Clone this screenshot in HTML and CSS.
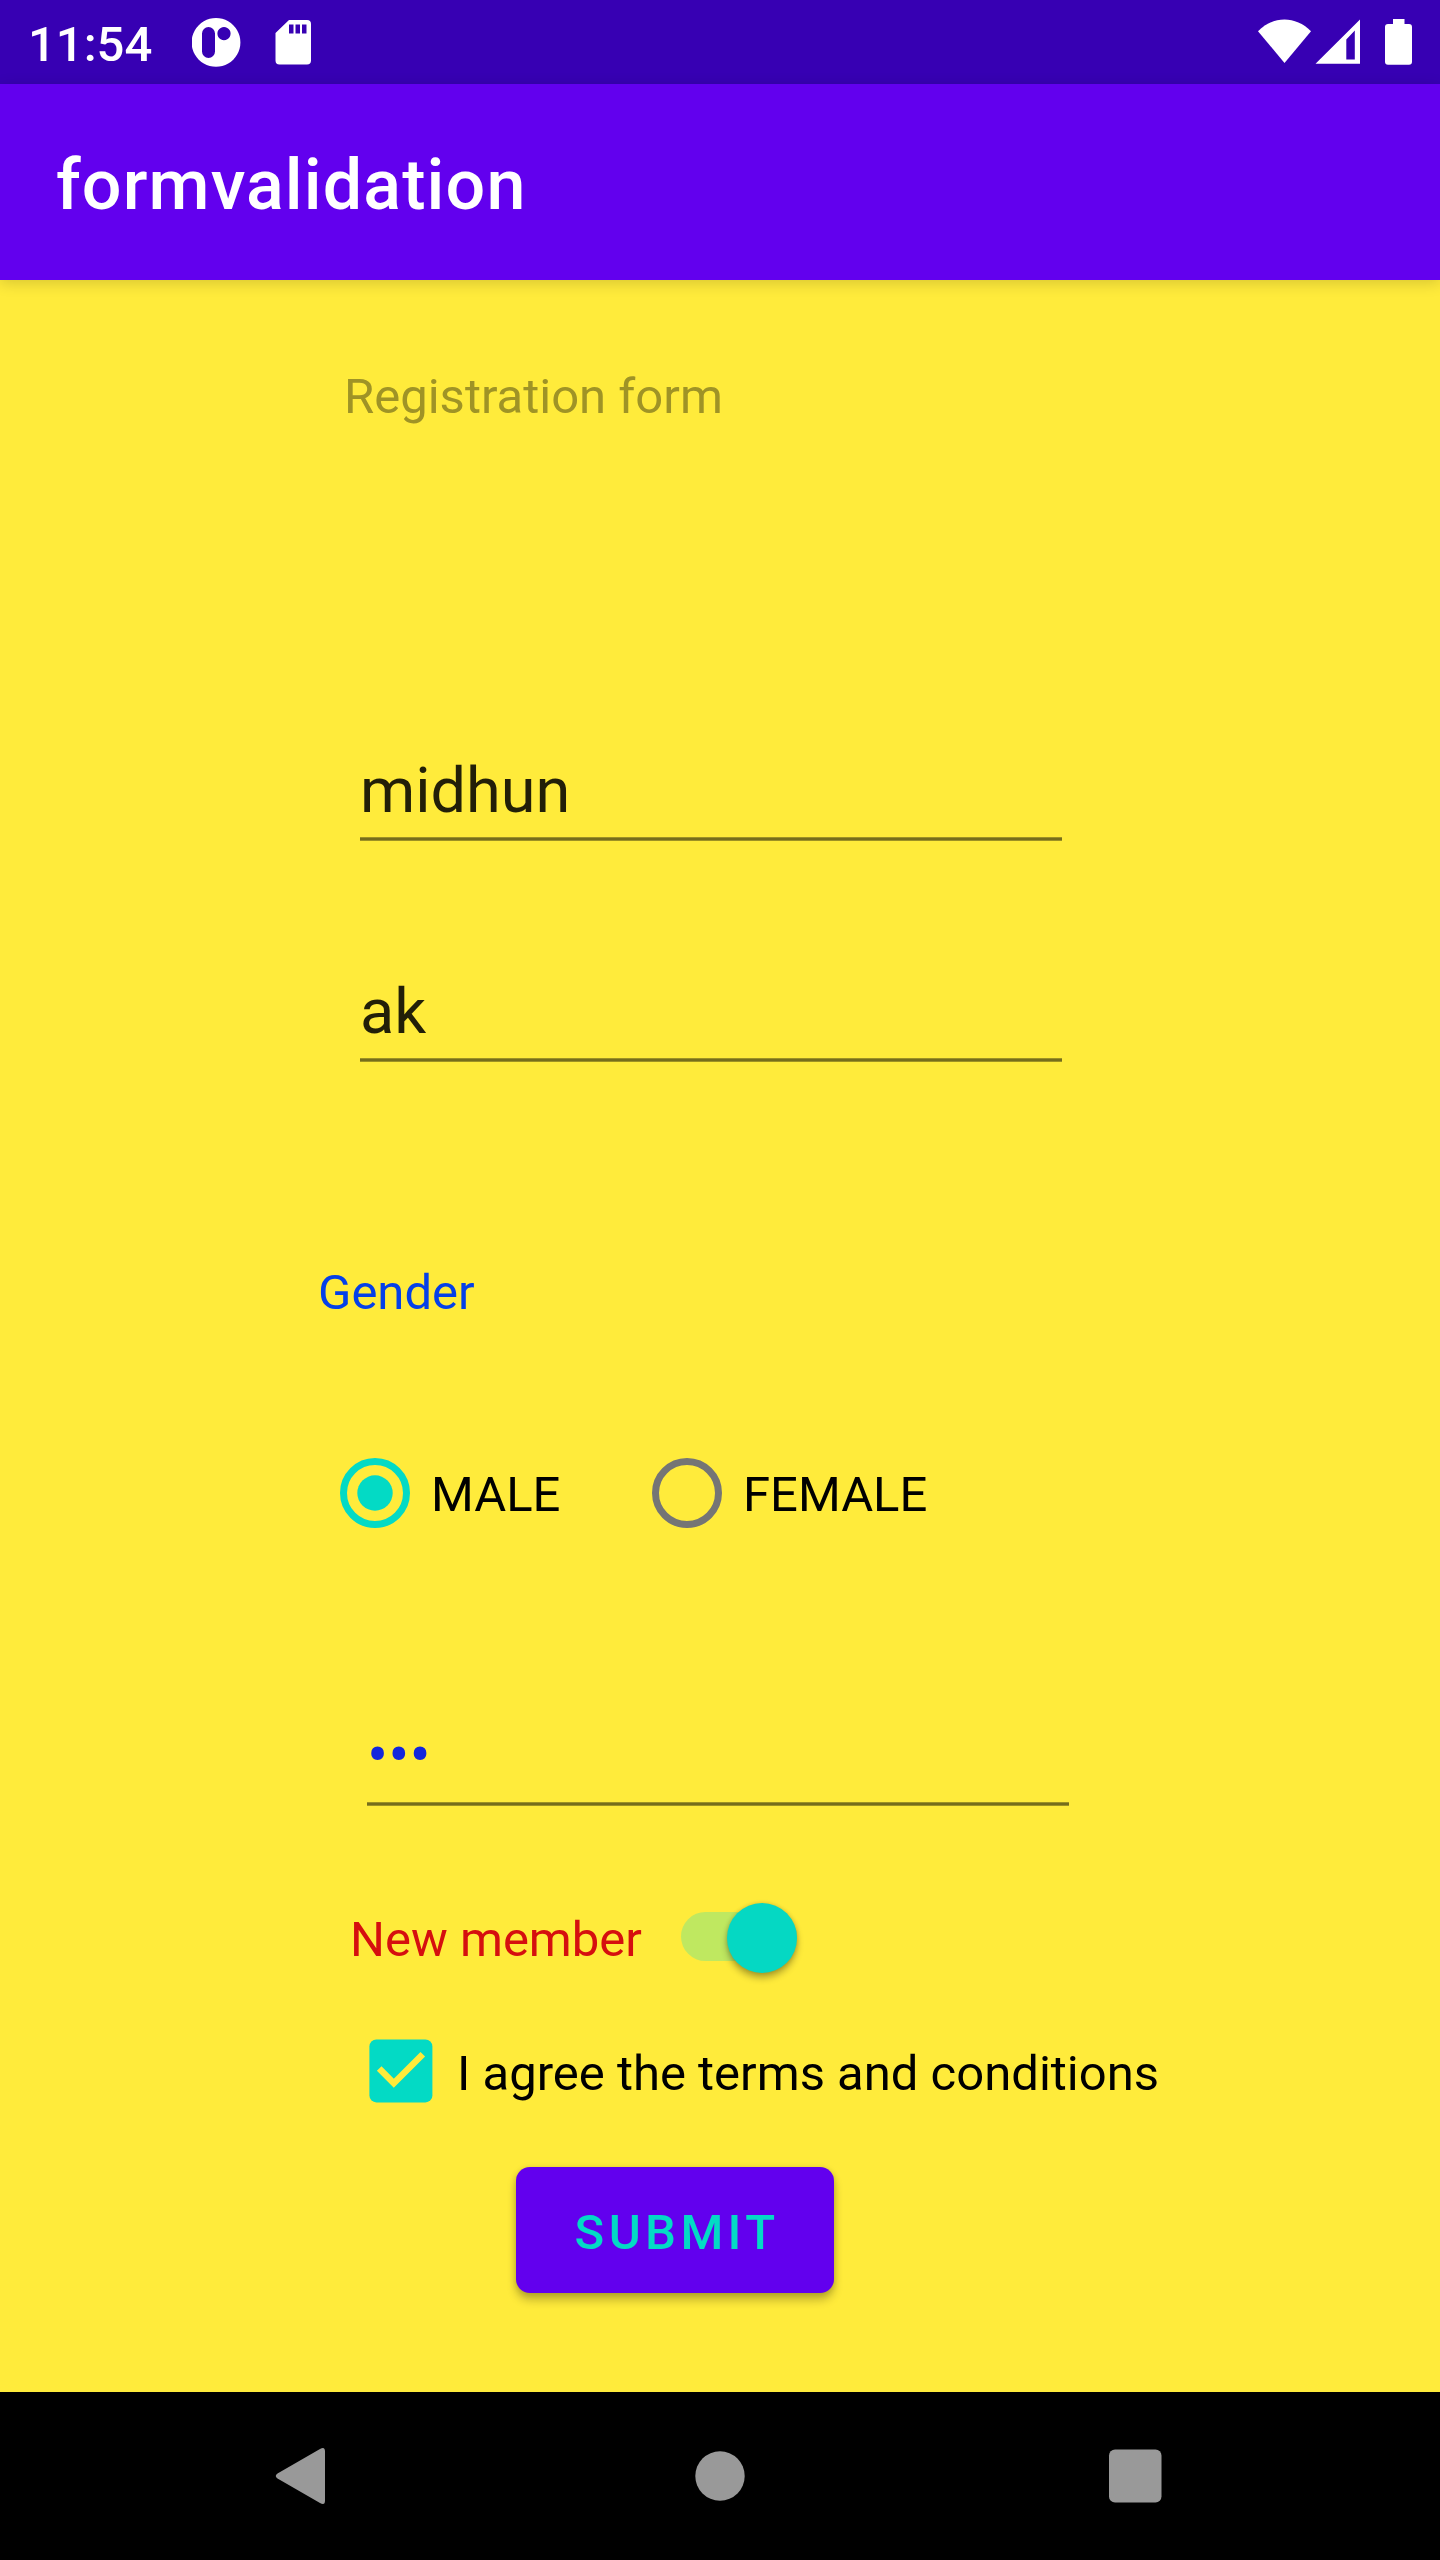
FILE: index.html
```
<!DOCTYPE html>
<html lang="en">
<head>
<meta charset="utf-8">
<title>formvalidation</title>
<link rel="stylesheet" href="styles.css">
</head>
<body>
<div class="screen">
  <header class="status-bar">
    <span class="clock">11:54</span>
    <svg class="status-left" width="126" height="84" viewBox="0 0 126 84" fill="#fff">
      <path fill-rule="evenodd" d="M24 18a24.4 24.4 0 1 0 .01 0zM16.500 27a6.500 6.500 0 0 1 6.500 6.500v18a6.500 6.500 0 0 1-13 0v-18a6.500 6.500 0 0 1 6.500-6.500zM32 27a6.600 6.600 0 1 1-.01 0z"/>
      <path fill-rule="evenodd" d="M97 20h18a4 4 0 0 1 4 4v36.500a4 4 0 0 1-4 4H87.500a4 4 0 0 1-4-4V33zM97 24.500v9h4.500v-9zM103.500 24.500v9h4.500v-9zM110 24.500v9h4.500v-9z"/>
    </svg>
    <svg class="status-right" width="160" height="84" viewBox="0 0 160 84" fill="#fff">
      <path d="M0 31.200C15.500 15.500 37.500 15.500 53 31.200L26.500 63z"/>
      <path fill-rule="evenodd" d="M57.500 63.700 102 19.500v44.200zM88.300 39.500V59.500h8.500V30.500z"/>
      <path d="M135 19h11.500v5h4.500a3 3 0 0 1 3 3v34.700a3 3 0 0 1-3 3h-21a3 3 0 0 1-3-3V27a3 3 0 0 1 3-3h5z"/>
    </svg>
  </header>

  <div class="app-bar"><h1 class="app-title">formvalidation</h1></div>

  <main class="form">
    <p class="heading">Registration form</p>
    <div class="field first-name">midhun</div>
    <div class="field last-name">ak</div>
    <p class="gender">Gender</p>
    <div class="radios">
      <div class="radio">
        <svg width="70" height="70" viewBox="0 0 70 70"><circle cx="35" cy="35" r="31.500" fill="none" stroke="#03dac5" stroke-width="7"/><circle cx="35" cy="35" r="17.700" fill="#03dac5"/></svg>
        <span class="male">MALE</span>
      </div>
      <div class="radio">
        <svg width="70" height="70" viewBox="0 0 70 70"><circle cx="35" cy="35" r="31.500" fill="none" stroke="#757575" stroke-width="7"/></svg>
        <span>FEMALE</span>
      </div>
    </div>
    <div class="field password">•••</div>
    <div class="member">
      <span>New member</span>
      <div class="switch"><div class="thumb"></div></div>
    </div>
    <div class="terms">
      <svg width="64" height="64" viewBox="0 0 64 64"><rect x=".4" y=".4" width="63" height="63" rx="7" fill="#03dac5"/><path d="M10.200 29.500 24.800 44.200 53.800 15.200" fill="none" stroke="#ffeb3b" stroke-width="6.500"/></svg>
      <span>I agree the terms and conditions</span>
    </div>
    <button class="submit">SUBMIT</button>
  </main>

  <nav class="nav-bar">
    <svg width="1440" height="168" viewBox="0 0 1440 168" fill="#999">
      <path d="M277.500 81.500 320 57q5-3 5 2.500v49q0 5.500-5 2.500L277.500 86.500q-3.500-2.500 0-5z"/>
      <circle cx="720" cy="84" r="24.700"/>
      <rect x="1109" y="57.500" width="52.500" height="53" rx="6"/>
    </svg>
  </nav>
</div>
</body>
</html>
```
FILE: styles.css
```
* { box-sizing: border-box; }
body {
  margin: 0;
  font-family: Roboto, "Liberation Sans", sans-serif;
  font-size: 49px;
  line-height: 58px;
  color: #000;
}
p, h1 { margin: 0; font-weight: 400; }
svg { display: block; flex: none; }
.screen {
  width: 1440px;
  height: 2560px;
  display: flex;
  flex-direction: column;
  overflow: hidden;
  background: #ffeb3b;
}
.status-bar {
  height: 84px;
  flex: none;
  display: flex;
  align-items: center;
  background: #3700b3;
  color: #fff;
}
.clock {
  width: 192px;
  padding: 5px 0 0 28px;
  flex: none;
  font-weight: 500;
}
.status-right { margin: 0 22px 0 auto; }
.app-bar {
  height: 196px;
  flex: none;
  display: flex;
  align-items: center;
  padding: 6px 56px 0;
  background: #6200ee;
  box-shadow: 0 3px 14px rgba(0, 0, 0, .16);
}
.app-title {
  font-size: 70px;
  line-height: 82px;
  font-weight: 500;
  letter-spacing: .016em;
  color: #fff;
}
.form {
  flex: 1;
  display: flex;
  flex-direction: column;
  align-items: flex-start;
  white-space: nowrap;
}
.heading { margin: 88px 0 0 344px; color: #9f9326; }
.field {
  width: 702px;
  height: 87px;
  margin-left: 360px;
  display: flex;
  flex-direction: column;
  justify-content: space-between;
  font-size: 63px;
  line-height: 74px;
  color: #221f08;
}
.field::after {
  content: "";
  height: 4px;
  background: linear-gradient(#9d9124 1px, #766d1b 1px 3px, #9d9124 3px);
}
.first-name { margin-top: 328px; }
.last-name { margin-top: 134px; }
.gender { margin: 202px 0 0 318px; color: #0540e8; }
.radios {
  display: flex;
  gap: 87px;
  margin: 136px 0 0 340px;
}
.radio { display: flex; align-items: center; gap: 21px; }
.radio span { padding-top: 4px; }
.male { width: 134px; }
.password { height: 87px; margin: 191px 0 0 367px; color: #1226dc; }
.member {
  height: 70px;
  display: flex;
  align-items: center;
  margin: 97px 0 0 350px;
  color: #d50f0f;
}
.member span { width: 331px; padding-top: 3px; }
.switch {
  width: 116px;
  height: 49px;
  margin-bottom: 3px;
  display: flex;
  align-items: center;
  justify-content: flex-end;
  border-radius: 25px;
  background: #bfe860;
}
.thumb {
  width: 70px;
  height: 70px;
  margin-top: 3px;
  flex: none;
  border-radius: 50%;
  background: #05d8c3;
  box-shadow: 0 5px 7px rgba(0, 0, 0, .3), 0 0 4px rgba(0, 0, 0, .15);
}
.terms {
  height: 64px;
  display: flex;
  align-items: center;
  gap: 24px;
  margin: 66px 0 0 369px;
}
.terms span { padding-top: 6px; }
.submit {
  width: 318px;
  height: 126px;
  margin: 64px 0 0 516px;
  padding: 5px 0 0 4px;
  border: 0;
  border-radius: 14px;
  background: #6200ee;
  color: #03dac5;
  font: 500 49px/58px Roboto, "Liberation Sans", sans-serif;
  letter-spacing: .0893em;
  box-shadow: 0 7px 10px rgba(0, 0, 0, .24), 0 1px 6px rgba(0, 0, 0, .15);
}
.nav-bar { height: 168px; flex: none; background: #000; }
```
